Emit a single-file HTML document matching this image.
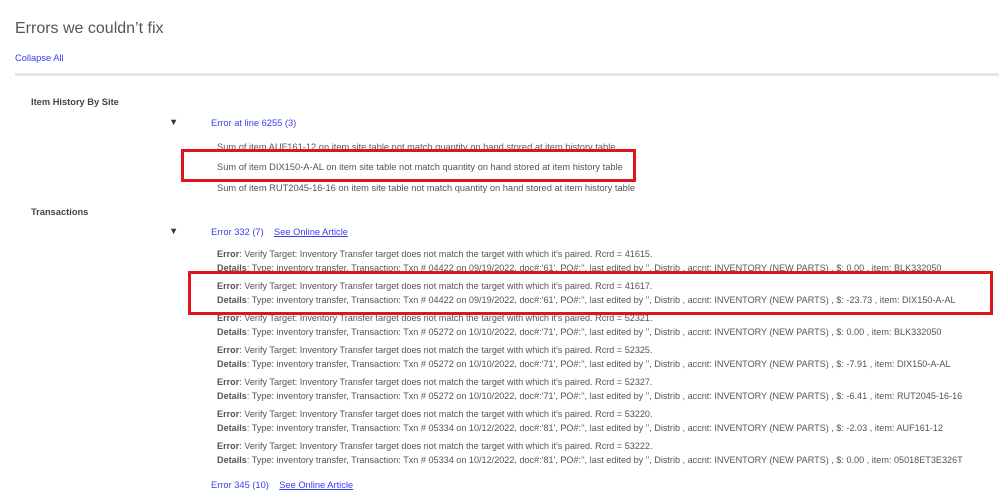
<!DOCTYPE html>
<html><head><style>
body{margin:0;width:999px;height:486px;overflow:hidden;background:#fff;font-family:"Liberation Sans",Arial,sans-serif;color:#555;position:relative}
.a{position:absolute;white-space:nowrap;font-size:9.3px;line-height:12px}
.e{font-size:9.1px}
.l{color:#3b3bf0}
.u{text-decoration:underline}
b{color:#555}
.box{position:absolute;border:3px solid #e0141e;box-sizing:border-box}
</style></head><body>
<div class="a" style="left:15px;top:19px;font-size:16px;line-height:20px;color:#555">Errors we couldn’t fix</div>
<div class="a l" style="left:15px;top:52px">Collapse All</div>
<div style="position:absolute;left:15px;top:73px;width:984px;height:3px;background:#e6e6e6"></div>
<div class="a" style="left:31px;top:96px;font-weight:bold;color:#444">Item History By Site</div>
<div class="a" style="left:169px;top:116px;color:#333">▼</div>
<div class="a l" style="left:211px;top:117px">Error at line 6255 (3)</div>
<div class="a" style="left:217px;top:141px">Sum of item AUF161-12 on item site table not match quantity on hand stored at item history table</div>
<div class="a" style="left:217px;top:161px">Sum of item DIX150-A-AL on item site table not match quantity on hand stored at item history table</div>
<div class="a" style="left:217px;top:182px">Sum of item RUT2045-16-16 on item site table not match quantity on hand stored at item history table</div>
<div class="box" style="left:181px;top:149px;width:455px;height:33px"></div>
<div class="a" style="left:31px;top:206px;font-weight:bold;color:#444">Transactions</div>
<div class="a" style="left:169px;top:225px;color:#333">▼</div>
<div class="a l" style="left:211px;top:226px">Error 332 (7) &nbsp;&nbsp;&nbsp;<span class="u">See Online Article</span></div>
<div id="errs"></div>
<div class="box" style="left:188px;top:271px;width:805px;height:44px"></div>
<div class="a l" style="left:211px;top:479px">Error 345 (10) &nbsp;&nbsp;&nbsp;<span class="u">See Online Article</span></div>
<script>
var d=[["41615","04422","09/19/2022","61","0.00","BLK332050"],["41617","04422","09/19/2022","61","-23.73","DIX150-A-AL"],["52321","05272","10/10/2022","71","0.00","BLK332050"],["52325","05272","10/10/2022","71","-7.91","DIX150-A-AL"],["52327","05272","10/10/2022","71","-6.41","RUT2045-16-16"],["53220","05334","10/12/2022","81","-2.03","AUF161-12"],["53222","05334","10/12/2022","81","0.00","05018ET3E326T"]];
var h="";d.forEach(function(r,i){var t=248+i*32;
h+='<div class="a e" style="left:217px;top:'+t+'px"><b>Error</b>: Verify Target: Inventory Transfer target does not match the target with which it\'s paired. Rcrd = '+r[0]+'.</div>';
h+='<div class="a e" style="left:217px;top:'+(t+14)+'px"><b>Details</b>: Type: inventory transfer, Transaction: Txn # '+r[1]+' on '+r[2]+', doc#:\''+r[3]+'\', PO#:\'\', last edited by \'\', Distrib , accnt: INVENTORY (NEW PARTS) , $: '+r[4]+' , item: '+r[5]+'</div>';});
document.getElementById('errs').innerHTML=h;
</script>
</body></html>
